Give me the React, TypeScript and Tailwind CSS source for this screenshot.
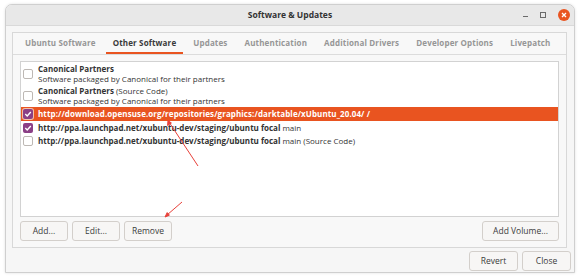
import React from "react";

const font = { fontFamily: '"Open Sans", "DejaVu Sans", sans-serif' };

const tabs = [
  "Ubuntu Software",
  "Other Software",
  "Updates",
  "Authentication",
  "Additional Drivers",
  "Developer Options",
  "Livepatch",
];

function Check({ checked, onOrange }: { checked?: boolean; onOrange?: boolean }) {
  if (checked) {
    return (
      <span
        className={
          "flex h-[10px] w-[10px] shrink-0 items-center justify-center rounded-[2px] bg-[#8b3f86] " +
          (onOrange ? "ring-1 ring-[#f3c0a8]" : "")
        }
      >
        <svg width="8" height="8" viewBox="0 0 8 8">
          <path d="M1.3 4.1 L3.2 6 L6.8 2" fill="none" stroke="#fff" strokeWidth="1.4" />
        </svg>
      </span>
    );
  }
  return (
    <span className="h-[10px] w-[10px] shrink-0 rounded-[2px] border border-[#bdb8b4] bg-white" />
  );
}

function Btn({ label, className }: { label: string; className: string }) {
  return (
    <div
      className={
        "flex h-[20px] items-center justify-center rounded-[3px] border border-[#d3cfcb] bg-[#f7f6f5] text-[8.5px] text-[#3c3c3c] " +
        className
      }
    >
      {label}
    </div>
  );
}

export default function App() {
  return (
    <div className="relative h-[280px] w-[580px] bg-white pl-[5px] pt-[4px]" style={font}>
      <div className="flex h-[269px] w-[570px] flex-col overflow-hidden rounded-t-[7px] border border-[#cfcfcf] bg-[#f6f6f6] shadow-[0_0_3px_rgba(0,0,0,0.12)]">
        {/* title bar */}
        <div className="relative flex h-[21px] shrink-0 items-center justify-center border-b border-[#d9d9d9] bg-[#e8e8e8]">
          <span className="text-[8.5px] font-bold text-[#333]">Software &amp; Updates</span>
          <div className="absolute right-[4px] top-0 flex h-full items-center gap-[12px]">
            <span className="mt-[2px] h-[1px] w-[5px] bg-[#6a6a6a]" />
            <span className="h-[6px] w-[6px] border border-[#6a6a6a]" />
            <span className="flex h-[12px] w-[12px] items-center justify-center rounded-full bg-[#e95420]">
              <svg width="6" height="6" viewBox="0 0 6 6">
                <path d="M1 1 L5 5 M5 1 L1 5" stroke="#fff" strokeWidth="1.3" />
              </svg>
            </span>
          </div>
        </div>

        {/* body */}
        <div className="flex flex-1 flex-col pl-[6px] pr-[7px] pt-[6px]">
          <div className="flex h-[216px] flex-col border border-[#d8d8d8] bg-[#f8f8f8]">
            <div className="flex h-[22px] shrink-0 items-stretch border-b border-[#dcdcdc] pl-[5px]">
              {tabs.map((t) => {
                const active = t === "Other Software";
                return (
                  <div
                    key={t}
                    className={
                      "mr-[3px] flex shrink-0 items-center whitespace-nowrap border-b-2 px-[7px] text-[8px] font-bold tracking-[0.15px] " +
                      (active ? "border-[#e95420] text-[#3a3a3a]" : "border-transparent text-[#969696]")
                    }
                  >
                    {t}
                  </div>
                );
              })}
            </div>

            <div className="flex flex-1 flex-col px-[7px] pt-[6px]">
              <div className="h-[156px] border border-[#d2d2d2] bg-white pt-[1px] text-[8px] leading-[10px] text-[#333]">
                <div className="flex items-center gap-[5px] py-[1px] pl-[2px]">
                  <Check />
                  <div>
                    <div className="font-bold">Canonical Partners</div>
                    <div>Software packaged by Canonical for their partners</div>
                  </div>
                </div>
                <div className="flex items-center gap-[5px] py-[1px] pl-[2px]">
                  <Check />
                  <div>
                    <div>
                      <span className="font-bold">Canonical Partners</span> (Source Code)
                    </div>
                    <div>Software packaged by Canonical for their partners</div>
                  </div>
                </div>
                <div className="flex h-[14px] items-center gap-[5px] bg-[#e95420] pl-[2px] font-bold tracking-[0.09px] text-white">
                  <Check checked onOrange />
                  <span>http://download.opensuse.org/repositories/graphics:/darktable/xUbuntu_20.04/ /</span>
                </div>
                <div className="flex h-[13px] items-center gap-[5px] pl-[2px]">
                  <Check checked />
                  <span>
                    <span className="font-bold">http://ppa.launchpad.net/xubuntu-dev/staging/ubuntu focal</span> main
                  </span>
                </div>
                <div className="flex h-[13px] items-center gap-[5px] pl-[2px]">
                  <Check />
                  <span>
                    <span className="font-bold">http://ppa.launchpad.net/xubuntu-dev/staging/ubuntu focal</span> main
                    (Source Code)
                  </span>
                </div>
              </div>

              <div className="mt-[4px] flex items-center">
                <Btn label="Add..." className="w-[48px]" />
                <Btn label="Edit..." className="ml-[4px] w-[48px]" />
                <Btn label="Remove" className="ml-[4px] w-[48px]" />
                <Btn label="Add Volume..." className="ml-auto w-[77px]" />
              </div>
            </div>
          </div>

          <div className="-mr-[4px] mt-[3px] flex justify-end gap-[4px]">
            <Btn label="Revert" className="h-[19px] w-[49px]" />
            <Btn label="Close" className="h-[19px] w-[49px]" />
          </div>
        </div>
      </div>

      {/* annotation arrows */}
      <svg className="pointer-events-none absolute left-0 top-0" width="580" height="280">
        <g stroke="#e8413a" strokeWidth="1" fill="#e8413a">
          <line x1="198" y1="166" x2="169" y2="122" />
          <path d="M168 120.5 L167.6 125.5 L171.4 123 Z" />
          <line x1="182" y1="202" x2="167" y2="215" />
          <path d="M165 217 L167.2 212.6 L169.4 215.2 Z" />
        </g>
      </svg>
    </div>
  );
}
